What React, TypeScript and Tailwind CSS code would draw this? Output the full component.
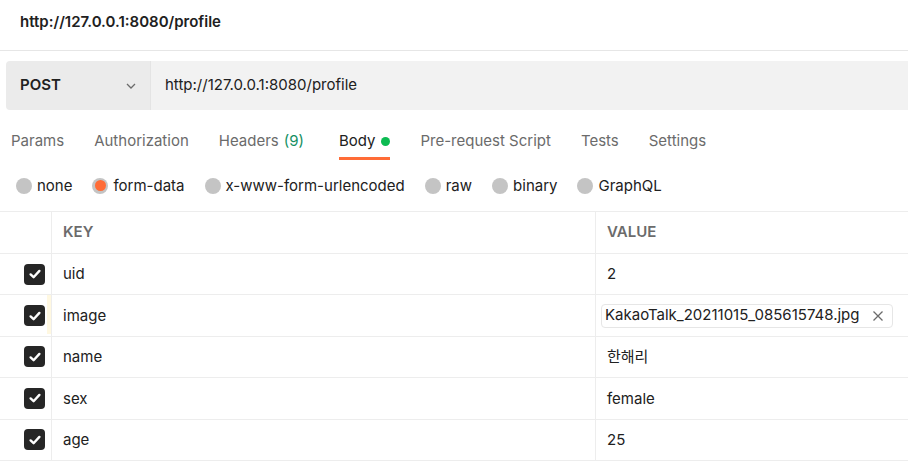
import React from "react";

const tabs = [
  { label: "Params" },
  { label: "Authorization" },
  { label: "Headers", count: "(9)" },
  { label: "Body", active: true },
  { label: "Pre-request Script" },
  { label: "Tests" },
  { label: "Settings" },
];

const radios = [
  { label: "none" },
  { label: "form-data", selected: true },
  { label: "x-www-form-urlencoded" },
  { label: "raw" },
  { label: "binary" },
  { label: "GraphQL" },
];

const rows = [
  { key: "uid", value: "2" },
  { key: "image", value: "KakaoTalk_20211015_085615748.jpg", file: true },
  { key: "name", value: "한해리" },
  { key: "sex", value: "female" },
  { key: "age", value: "25" },
];

function Check() {
  return (
    <div className="w-[21px] h-[21px] rounded-[4px] bg-[#262626] flex items-center justify-center">
      <svg width="14" height="14" viewBox="0 0 14 14" fill="none">
        <path d="M2.6 7.4 L5.6 10.2 L11.4 3.9" stroke="white" strokeWidth="2.4" strokeLinecap="round" strokeLinejoin="round" />
      </svg>
    </div>
  );
}

export default function App() {
  return (
    <div
      className="w-[908px] h-[462px] overflow-hidden bg-white text-[#212121] text-[15px]"
      style={{ fontFamily: 'Inter, "Noto Sans CJK KR", sans-serif' }}
    >
      <div className="h-[51px] border-b border-[#e6e6e6] pl-[20px] pt-[11px]">
        <span className="font-semibold leading-[20px]">http://127.0.0.1:8080/profile</span>
      </div>

      <div className="ml-[6px] mt-[10px] h-[49px] flex rounded-l-[4px] overflow-hidden">
        <div className="w-[144px] bg-[#ebebeb] flex items-center pl-[14px] pr-[12px] justify-between">
          <span className="font-semibold">POST</span>
          <svg width="14" height="14" viewBox="0 0 14 14" fill="none">
            <path d="M3 5 L7 9 L11 5" stroke="#6b6b6b" strokeWidth="1.3" />
          </svg>
        </div>
        <div className="flex-1 bg-[#f2f2f2] flex items-center pl-[14px] border-l border-[#e4e4e4]">
          http://127.0.0.1:8080/profile
        </div>
      </div>

      <div className="h-[50px] flex pl-[11px] gap-[30px]">
        {tabs.map((t) => (
          <div key={t.label} className="flex flex-col pt-[21px]">
            <div className={`leading-[20px] flex items-center whitespace-nowrap ${t.active ? "text-[#212121]" : "text-[#6b6b6b]"} ${t.count ? "pr-[5px]" : ""}`}>
              {t.label}
              {t.count && <span className="ml-[5px] text-[#168f63]">{t.count}</span>}
              {t.active && <span className="ml-[6px] w-[9px] h-[9px] rounded-full bg-[#0cbb52] inline-block" />}
            </div>
            <div className={`mt-[6px] h-[3px] ${t.active ? "bg-[#ff6c37]" : ""}`} />
          </div>
        ))}
      </div>

      <div className="h-[51px] flex items-center pl-[16px] gap-[20px]">
        {radios.map((r) => (
          <div key={r.label} className="flex items-center gap-[5px]">
            {r.selected ? (
              <div className="w-[16px] h-[16px] rounded-full bg-[#c4c4c4] flex items-center justify-center">
                <div className="w-[11px] h-[11px] rounded-full bg-[#ff6c37]" />
              </div>
            ) : (
              <div className="w-[16px] h-[16px] rounded-full bg-[#c4c4c4]" />
            )}
            <span className="leading-[20px]">{r.label}</span>
          </div>
        ))}
      </div>

      <div className="border-t border-[#ededed]">
        <div className="flex h-[42px] border-b border-[#ededed]">
          <div className="w-[52px] border-r border-[#ededed]" />
          <div className="w-[544px] border-r border-[#ededed] flex items-center pl-[11px] font-semibold text-[#6b6b6b]">KEY</div>
          <div className="flex-1 flex items-center pl-[11px] font-semibold text-[#6b6b6b]">VALUE</div>
        </div>
        {rows.map((r) => (
          <div key={r.key} className="flex h-[41.4px] border-b border-[#ededed]">
            <div className="w-[52px] border-r border-[#ededed] flex items-center pl-[24px] relative">
              <Check />
              {r.file && <div className="absolute right-0 top-0 bottom-[2px] w-[4px] bg-[#fff8e1]" />}
            </div>
            <div className="w-[544px] border-r border-[#ededed] flex items-center pl-[11px] pt-[1px]">{r.key}</div>
            <div className={`flex-1 flex items-center ${r.file ? "pl-[5px]" : "pl-[11px] pt-[1px]"}`}>
              {r.file ? (
                <div className="h-[24px] w-[292px] border border-[#e6e6e6] rounded-[4px] flex items-center pl-[3px] pr-[8px] justify-between">
                  <span>{r.value}</span>
                  <svg width="12" height="12" viewBox="0 0 12 12" fill="none">
                    <path d="M1.5 1.5 L10.5 10.5 M10.5 1.5 L1.5 10.5" stroke="#6b6b6b" strokeWidth="1.3" />
                  </svg>
                </div>
              ) : (
                r.value
              )}
            </div>
          </div>
        ))}
      </div>
    </div>
  );
}
